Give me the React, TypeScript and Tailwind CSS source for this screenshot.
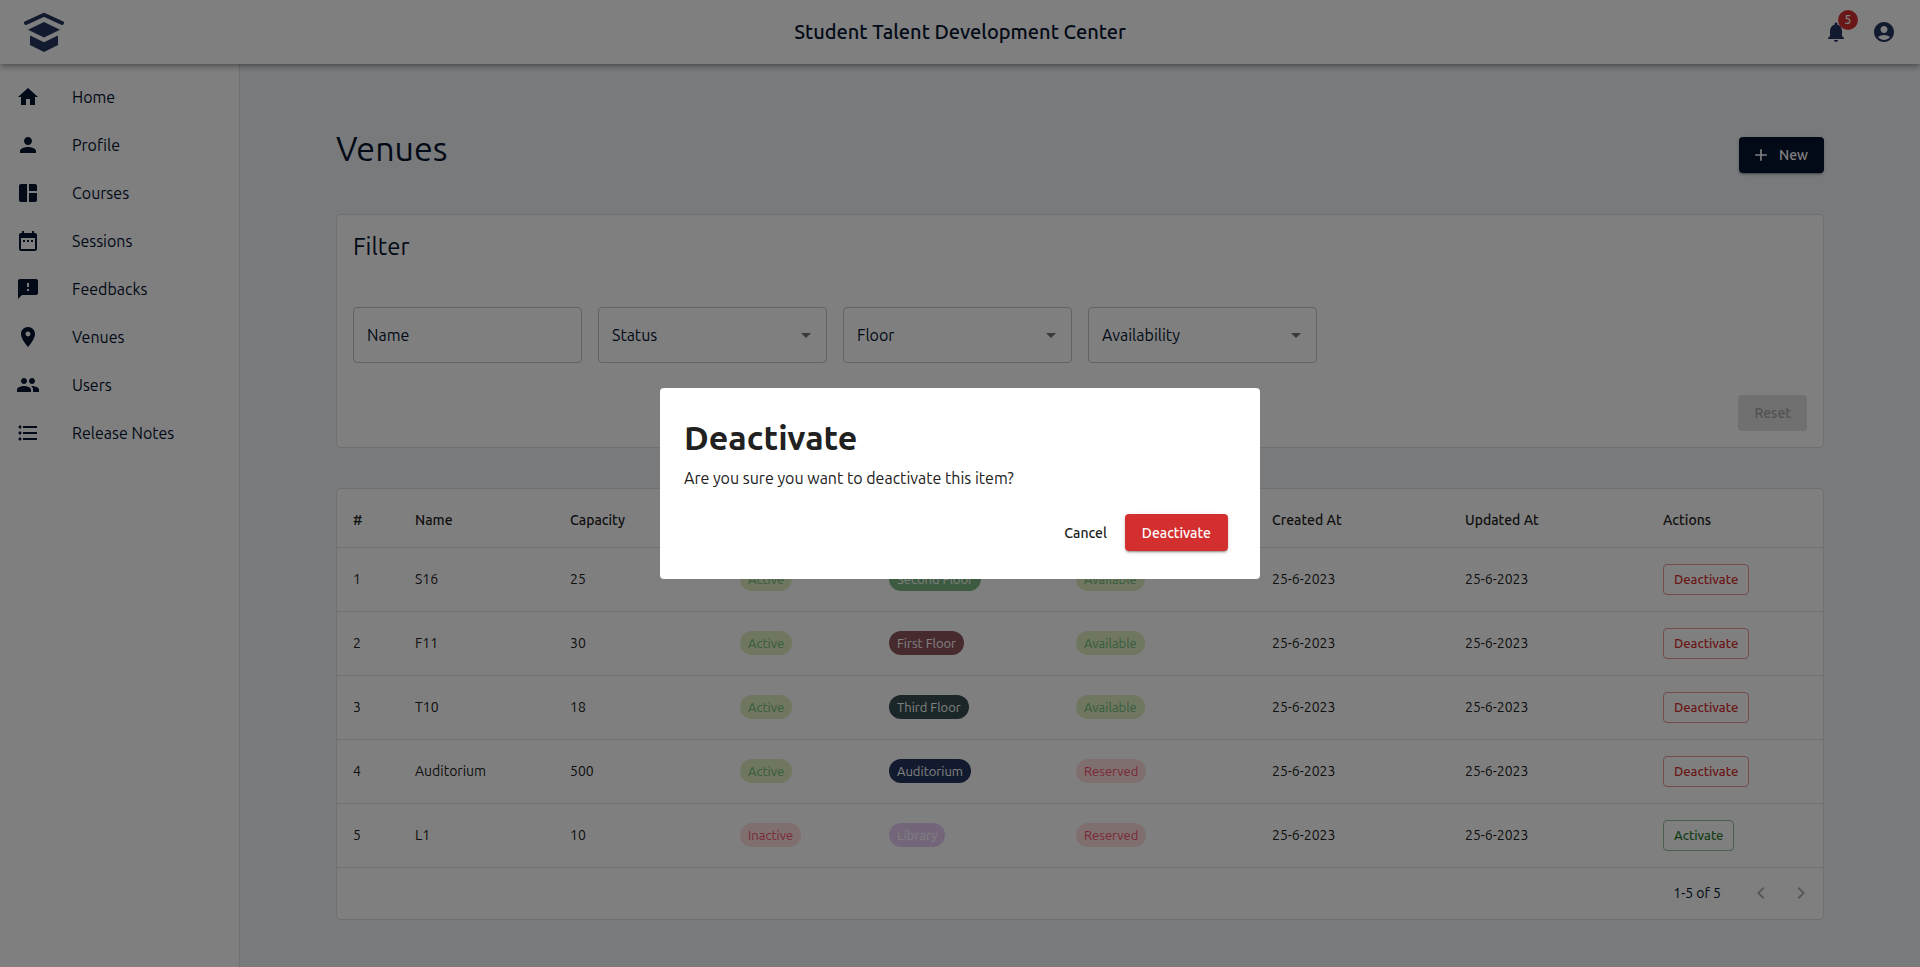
import type { ReactNode } from "react";
import type { IconType } from "react-icons";
import {
  MdAccountCircle,
  MdAdd,
  MdArrowDropDown,
  MdDateRange,
  MdFeedback,
  MdFormatListBulleted,
  MdHome,
  MdKeyboardArrowLeft,
  MdKeyboardArrowRight,
  MdNotifications,
  MdPeople,
  MdPerson,
  MdPlace,
  MdSpaceDashboard,
} from "react-icons/md";

const navItems: { label: string; icon: IconType }[] = [
  { label: "Home", icon: MdHome },
  { label: "Profile", icon: MdPerson },
  { label: "Courses", icon: MdSpaceDashboard },
  { label: "Sessions", icon: MdDateRange },
  { label: "Feedbacks", icon: MdFeedback },
  { label: "Venues", icon: MdPlace },
  { label: "Users", icon: MdPeople },
  { label: "Release Notes", icon: MdFormatListBulleted },
];

type Venue = {
  id: number;
  name: string;
  capacity: number;
  active: boolean;
  floor: string;
  floorColor: string;
  available: boolean;
};

const venues: Venue[] = [
  { id: 1, name: "S16", capacity: 25, active: true, floor: "Second Floor", floorColor: "bg-[#78b780]", available: true },
  { id: 2, name: "F11", capacity: 30, active: true, floor: "First Floor", floorColor: "bg-[#8e545c]", available: true },
  { id: 3, name: "T10", capacity: 18, active: true, floor: "Third Floor", floorColor: "bg-[#344c4e]", available: true },
  { id: 4, name: "Auditorium", capacity: 500, active: true, floor: "Auditorium", floorColor: "bg-[#24345e]", available: false },
  { id: 5, name: "L1", capacity: 10, active: false, floor: "Library", floorColor: "bg-[#e8ccf5]", available: false },
];

const columns = [
  { label: "#", width: "w-[62px]" },
  { label: "Name", width: "w-[155px]" },
  { label: "Capacity", width: "w-[170px]" },
  { label: "Status", width: "w-[149px]" },
  { label: "Floor", width: "w-[187px]" },
  { label: "Availability", width: "w-[196px]" },
  { label: "Created At", width: "w-[193px]" },
  { label: "Updated At", width: "w-[198px]" },
  { label: "Actions", width: "w-[176px]" },
];

function Logo() {
  return (
    <svg viewBox="0 0 40 40" className="size-10" aria-hidden="true">
      <path d="M2 11 20 2.8 38 11" fill="none" stroke="#24345e" strokeWidth="4" strokeLinecap="round" strokeLinejoin="round" />
      <path d="M4 17.8 20 10l16 7.8-16 7.6Z" fill="#24345e" />
      <path d="m6 23.6 14 6.6 14-6.6v9.4l-14 7-14-7Z" fill="#24345e" />
    </svg>
  );
}

function Chip({ color, children }: { color: string; children: ReactNode }) {
  return (
    <span className={`inline-flex h-6 items-center rounded-xl px-2 text-[13px] ${color}`}>{children}</span>
  );
}

function StateChip({ good, children }: { good: boolean; children: ReactNode }) {
  return <Chip color={good ? "bg-[#deeec0] text-[#70b87e]" : "bg-[#ffdede] text-[#f5506a]"}>{children}</Chip>;
}

function FilterSelect({ label }: { label: string }) {
  return (
    <div className="relative w-[229px]">
      <select
        aria-label={label}
        className="h-14 w-full appearance-none rounded border border-[#c4c4c4] bg-transparent px-[13px] text-base text-[#04132f]"
      >
        <option>{label}</option>
      </select>
      <MdArrowDropDown className="pointer-events-none absolute top-4 right-[9px] size-6 text-[#757575]" />
    </div>
  );
}

function DeactivateDialog() {
  return (
    <div className="fixed inset-0 flex items-center justify-center bg-black/50">
      <div
        role="dialog"
        aria-modal="true"
        aria-labelledby="dialog-title"
        className="w-full max-w-[600px] rounded bg-white px-6 pt-[27px] pb-7 text-[#212121]"
      >
        <h2 id="dialog-title" className="text-[34px] leading-11 font-bold">
          Deactivate
        </h2>
        <p className="pt-[7px] text-base leading-6">Are you sure you want to deactivate this item?</p>
        <div className="flex justify-end gap-2.5 pt-6 pr-2 text-sm font-medium">
          <button className="h-[37px] px-2">Cancel</button>
          <button className="h-[37px] rounded bg-[#d32f2f] px-[17px] text-white shadow-[0_3px_1px_-2px_rgba(0,0,0,0.2),0_2px_2px_0_rgba(0,0,0,0.14),0_1px_5px_0_rgba(0,0,0,0.12)]">
            Deactivate
          </button>
        </div>
      </div>
    </div>
  );
}

export default function App() {
  return (
    <div className="flex min-h-screen flex-col bg-[#f3f5f9] font-['Ubuntu','Noto_Sans',sans-serif] text-[#04132f]">
      <header className="relative z-10 grid h-16 grid-cols-[1fr_auto_1fr] items-center bg-white px-6 text-[#24345e] shadow-[0_2px_4px_-1px_rgba(0,0,0,0.2),0_4px_5px_0_rgba(0,0,0,0.14),0_1px_10px_0_rgba(0,0,0,0.12)]">
        <Logo />
        <h1 className="text-xl font-medium text-[#04132f]">Student Talent Development Center</h1>
        <div className="flex justify-end gap-6">
          <button aria-label="Notifications" className="relative">
            <MdNotifications className="size-6" />
            <span className="absolute -top-2.5 left-3.5 flex size-5 items-center justify-center rounded-full bg-[#d32f2f] text-xs font-medium text-white">
              5
            </span>
          </button>
          <button aria-label="Account">
            <MdAccountCircle className="size-6" />
          </button>
        </div>
      </header>

      <div className="flex grow">
        <nav className="w-60 shrink-0 border-r border-[#e0e0e0] bg-white pt-[9px]">
          {navItems.map(({ label, icon: Icon }) => (
            <a key={label} href="#" className="flex h-12 items-center gap-8 px-4 text-base">
              <Icon className="size-6" />
              {label}
            </a>
          ))}
        </nav>

        <main className="grow px-24 pt-16 pb-12">
          <div className="flex items-end justify-between pb-[41px]">
            <h2 className="pb-[5px] text-[34px] leading-10">Venues</h2>
            <button className="flex h-9 items-center gap-2 rounded bg-[#04132f] pr-4 pl-3 text-sm font-medium text-white shadow-[0_3px_1px_-2px_rgba(0,0,0,0.2),0_2px_2px_0_rgba(0,0,0,0.14),0_1px_5px_0_rgba(0,0,0,0.12)]">
              <MdAdd className="size-5" />
              New
            </button>
          </div>

          <section className="rounded border border-[#e0e0e0] bg-white p-4">
            <h3 className="text-2xl leading-8">Filter</h3>
            <div className="flex flex-wrap gap-4 pt-11">
              <input
                aria-label="Name"
                placeholder="Name"
                className="h-14 w-[229px] rounded border border-[#c4c4c4] px-[13px] text-base placeholder:text-[#04132f]"
              />
              <FilterSelect label="Status" />
              <FilterSelect label="Floor" />
              <FilterSelect label="Availability" />
            </div>
            <div className="flex justify-end pt-8">
              <button disabled className="h-9 rounded bg-[#e0e0e0] px-4 text-sm font-medium text-[#a6a6a6]">
                Reset
              </button>
            </div>
          </section>

          <section className="mt-10 rounded border border-[#e0e0e0] bg-white">
            <table className="w-full table-fixed text-left text-sm text-[#212121]">
              <thead>
                <tr className="h-[58px] border-b border-[#e0e0e0]">
                  {columns.map((column) => (
                    <th key={column.label} className={`${column.width} px-4 pt-1 font-medium`}>
                      {column.label}
                    </th>
                  ))}
                </tr>
              </thead>
              <tbody>
                {venues.map((venue) => (
                  <tr key={venue.id} className="h-16 border-b border-[#e0e0e0]">
                    <td className="px-4">{venue.id}</td>
                    <td className="px-4">{venue.name}</td>
                    <td className="px-4">{venue.capacity}</td>
                    <td className="px-4">
                      <StateChip good={venue.active}>{venue.active ? "Active" : "Inactive"}</StateChip>
                    </td>
                    <td className="px-4">
                      <Chip color={`${venue.floorColor} text-white`}>{venue.floor}</Chip>
                    </td>
                    <td className="px-4">
                      <StateChip good={venue.available}>{venue.available ? "Available" : "Reserved"}</StateChip>
                    </td>
                    <td className="px-4">25-6-2023</td>
                    <td className="px-4">25-6-2023</td>
                    <td className="px-4">
                      <button
                        className={`h-[31px] rounded border px-2.5 text-[13px] font-medium ${
                          venue.active ? "border-[#e99797] text-[#d32f2f]" : "border-[#96bd98] text-[#2e7d32]"
                        }`}
                      >
                        {venue.active ? "Deactivate" : "Activate"}
                      </button>
                    </td>
                  </tr>
                ))}
              </tbody>
            </table>
            <div className="flex h-[51px] items-center justify-end pr-2.5 text-sm">
              <span className="pr-7">1-5 of 5</span>
              <div className="flex gap-4">
                <button disabled aria-label="Previous page">
                  <MdKeyboardArrowLeft className="size-6 text-[#b0b0b0]" />
                </button>
                <button disabled aria-label="Next page">
                  <MdKeyboardArrowRight className="size-6 text-[#b0b0b0]" />
                </button>
              </div>
            </div>
          </section>
        </main>
      </div>

      <div className="relative z-20">
        <DeactivateDialog />
      </div>
    </div>
  );
}
